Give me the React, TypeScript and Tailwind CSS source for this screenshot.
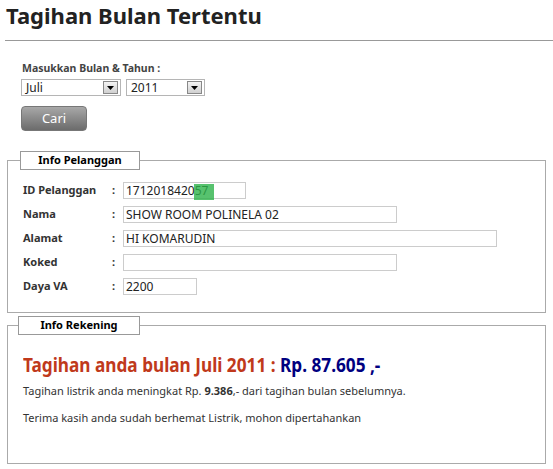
export default function App() {
  const sel = 'flex h-[17px] items-center justify-between border border-[#b5b5b5] bg-white pl-1 pr-[2px] text-[12px] text-[#222]';
  const arrow = (
    <span className="flex h-[13px] w-[15px] items-center justify-center border border-[#888] bg-gradient-to-b from-[#f4f4f4] to-[#d0d0d0]">
      <svg width="7" height="4" viewBox="0 0 7 4"><path d="M0 0h7L3.5 4z" fill="#000" /></svg>
    </span>
  );
  const rows = [
    { label: 'ID Pelanggan', value: '171201842057', w: 'w-[123px]' },
    { label: 'Nama', value: 'SHOW ROOM  POLINELA 02', w: 'w-[274px]' },
    { label: 'Alamat', value: 'HI KOMARUDIN', w: 'w-[374px]' },
    { label: 'Koked', value: '', w: 'w-[274px]' },
    { label: 'Daya VA', value: '2200', w: 'w-[74px]' },
  ];
  const legend = 'border border-[#999] bg-white text-[11px] font-bold text-black h-[19px] flex items-center justify-center';
  return (
    <div className="h-[469px] w-[553px] overflow-hidden bg-white font-['DejaVu_Sans','Verdana',sans-serif] text-[#333]">
      <h1 className="pl-[6px] pt-[2px] text-[22px] font-bold leading-[27px] text-[#222]">Tagihan Bulan Tertentu</h1>
      <div className="ml-[5px] mt-[11px] border-t border-[#999]" />
      <div className="pl-[21px] pt-[20px]">
        <div className="pl-[1px] text-[10.5px] font-bold leading-[14px] text-[#444]">Masukkan Bulan &amp; Tahun :</div>
        <div className="mt-[4px] flex gap-[5px] font-['Liberation_Sans',sans-serif]">
          <div className={sel + ' w-[100px]'}><span>Juli</span>{arrow}</div>
          <div className={sel + ' w-[79px]'}><span>2011</span>{arrow}</div>
        </div>
        <button className="mt-[10px] h-[25px] w-[66px] rounded-[4px] border border-[#777] bg-gradient-to-b from-[#a8a8a8] to-[#6c6c6c] font-['Liberation_Sans',sans-serif] text-[13px] text-white">Cari</button>
      </div>
      <fieldset className="mx-[7px] mt-[20px] h-[162px] border border-[#aaa] pl-[15px] pt-[12px]">
        <legend className={legend + ' w-[120px] -ml-[3px]'}>Info Pelanggan</legend>
        <div className="flex flex-col gap-[7px]">
          {rows.map((r) => (
            <div key={r.label} className="flex items-center text-[11px]">
              <span className="w-[89px] font-bold text-[#333]">{r.label}</span>
              <span className="w-[11px] font-bold">:</span>
              <div className={'relative h-[17px] border border-[#ccc] pl-[2px] font-[\'Liberation_Sans\',sans-serif] text-[12px] leading-[15px] text-[#222] ' + r.w}>
                {r.value}
                {r.label === 'ID Pelanggan' && (
                  <span className="absolute left-[70px] top-[1px] h-[16px] w-[20px] bg-[#2db34a] opacity-80" />
                )}
              </div>
            </div>
          ))}
        </div>
      </fieldset>
      <fieldset className="mx-[7px] mt-[3px] h-[148px] border border-[#aaa] pl-[15px]">
        <legend className={legend + ' w-[122px] -ml-[5px]'}>Info Rekening</legend>
        <div className="mt-[18px] origin-left scale-x-[0.86] whitespace-nowrap font-['Liberation_Sans',sans-serif] text-[20px] font-bold leading-[24px]">
          <span className="text-[#c0391b]">Tagihan anda bulan Juli 2011 : </span>
          <span className="text-[#000080]">Rp. 87.605 ,-</span>
        </div>
        <p className="mt-[6px] text-[11px] text-[#333]">Tagihan listrik anda meningkat Rp. <b>9.386</b>,- dari tagihan bulan sebelumnya.</p>
        <p className="mt-[10px] text-[11px] text-[#333]">Terima kasih anda sudah berhemat Listrik, mohon dipertahankan</p>
      </fieldset>
    </div>
  );
}
